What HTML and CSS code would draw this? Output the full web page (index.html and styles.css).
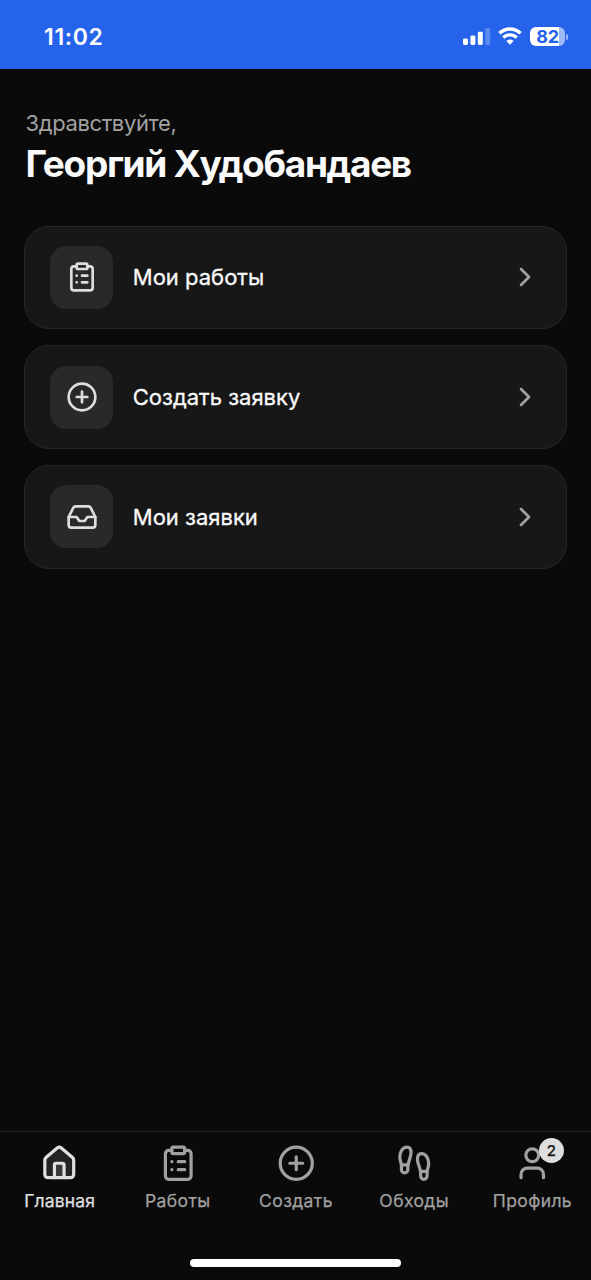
FILE: index.html
```html
<!DOCTYPE html>
<html lang="ru">
<head>
<meta charset="utf-8">
<title>Главная</title>
<link rel="stylesheet" href="styles.css">
</head>
<body>
<svg class="sprite" aria-hidden="true">
  <symbol id="clipboard" viewBox="0 0 24 24"><rect width="8" height="4" x="8" y="2" rx="1"/><path d="M16 4h2a2 2 0 0 1 2 2v14a2 2 0 0 1-2 2H6a2 2 0 0 1-2-2V6a2 2 0 0 1 2-2h2M12 11h4M12 16h4M8 11h.01M8 16h.01"/></symbol>
  <symbol id="plus" viewBox="0 0 24 24"><circle cx="12" cy="12" r="10"/><path d="M8 12h8M12 8v8"/></symbol>
  <symbol id="inbox" viewBox="0 0 24 24"><path d="M22 12h-6l-2 3h-4l-2-3H2"/><path d="M5.45 5.11 2 12v6a2 2 0 0 0 2 2h16a2 2 0 0 0 2-2v-6l-3.45-6.89A2 2 0 0 0 16.76 4H7.24a2 2 0 0 0-1.79 1.11z"/></symbol>
  <symbol id="chevron" viewBox="0 0 24 24"><path d="m9 18 6-6-6-6"/></symbol>
</svg>
<div class="screen">
  <header class="status">
    <span class="time">11:02</span>
    <div class="indicators">
      <svg class="signal" viewBox="0 0 28 18"><rect x="0" y="11.5" width="5" height="6.5" rx="1.4"/><rect x="7.4" y="8.5" width="5" height="9.5" rx="1.4"/><rect x="14.8" y="4.7" width="5" height="13.3" rx="1.4"/><rect class="faint" x="22.2" y="1" width="5" height="17" rx="1.4"/></svg>
      <svg class="wifi" viewBox="0 0 24 18"><path d="M1.4 6.3a15.2 15.2 0 0 1 21.2 0M5.3 10.6a9.6 9.6 0 0 1 13.4 0"/><path class="dot" d="M8.4 14a5.2 5.2 0 0 1 7.2 0L12 17.8z"/></svg>
      <div class="battery"><div class="level"><span>82</span></div><i class="cap"></i></div>
    </div>
  </header>
  <main class="content">
    <p class="hello">Здравствуйте,</p>
    <h1 class="name">Георгий Худобандаев</h1>
    <div class="cards">
      <a class="card"><span class="tile"><svg class="icon"><use href="#clipboard"/></svg></span><span class="label">Мои работы</span><svg class="chev"><use href="#chevron"/></svg></a>
      <a class="card"><span class="tile"><svg class="icon"><use href="#plus"/></svg></span><span class="label">Создать заявку</span><svg class="chev"><use href="#chevron"/></svg></a>
      <a class="card"><span class="tile"><svg class="icon"><use href="#inbox"/></svg></span><span class="label">Мои заявки</span><svg class="chev"><use href="#chevron"/></svg></a>
    </div>
  </main>
  <nav class="tabs">
    <a class="tab active"><svg class="tabicon home" viewBox="0 0 24 24"><path d="M3 10a2 2 0 0 1 .709-1.528l7-5.999a2 2 0 0 1 2.582 0l7 5.999A2 2 0 0 1 21 10v9a2 2 0 0 1-2 2H5a2 2 0 0 1-2-2z"/><path d="M15 21v-8a1 1 0 0 0-1-1h-4a1 1 0 0 0-1 1v8"/></svg><span>Главная</span></a>
    <a class="tab"><svg class="tabicon"><use href="#clipboard"/></svg><span>Работы</span></a>
    <a class="tab"><svg class="tabicon"><use href="#plus"/></svg><span>Создать</span></a>
    <a class="tab"><svg class="tabicon" viewBox="0 0 24 24"><path d="M4 16v-2.38C4 11.5 2.97 10.5 3 8c.03-2.72 1.49-6 4.5-6C9.37 2 10 3.8 10 5.5c0 3.11-2 5.66-2 8.68V16a2 2 0 1 1-4 0Z"/><path d="M20 20v-2.38c0-2.12 1.03-3.12 1-5.62-.03-2.72-1.49-6-4.5-6C14.63 6 14 7.8 14 9.5c0 3.11 2 5.66 2 8.68V20a2 2 0 1 0 4 0Z"/><path d="M16 17h4M4 13h4"/></svg><span>Обходы</span></a>
    <a class="tab"><svg class="tabicon" viewBox="0 0 24 24"><path d="M19 21v-2a4 4 0 0 0-4-4H9a4 4 0 0 0-4 4v2"/><circle cx="12" cy="7" r="4"/></svg><b class="badge">2</b><span>Профиль</span></a>
  </nav>
  <div class="homebar"></div>
</div>
</body>
</html>
```
FILE: styles.css
```css
* { box-sizing: border-box; }
body { margin: 0; background: #0a0a0a; font-family: Inter, "Noto Sans", sans-serif; color: #fafafa; }
svg { display: block; fill: none; stroke: currentColor; stroke-linecap: round; stroke-linejoin: round; }
.sprite { position: absolute; width: 0; height: 0; }
.screen { width: 591px; height: 1280px; display: flex; flex-direction: column; overflow: hidden; }
.status { height: 69px; background: #2563eb; display: flex; justify-content: space-between; padding: 0 23px 0 44px; flex: none; }
.time { font-size: 23px; font-weight: 600; line-height: 28px; margin-top: 22.5px; letter-spacing: .65px; }
.indicators { display: flex; margin-top: 27px; height: 19px; }
.signal { width: 28px; height: 18px; fill: #fff; stroke: none; }
.faint { opacity: .25; }
.wifi { width: 24px; height: 18px; margin-left: 7px; stroke: #fff; stroke-width: 3.4; stroke-linecap: butt; }
.wifi .dot { fill: #fff; stroke: none; }
.battery { display: flex; align-items: center; margin-left: 8px; height: 19px; }
.level { width: 35px; height: 19px; border-radius: 6px; background: linear-gradient(90deg, #fff 82%, #9db9f7 82%); color: #2563eb; font-size: 18px; line-height: 20px; font-weight: 700; letter-spacing: -.4px; text-align: center; }
.cap { width: 2px; height: 6px; margin-left: 1px; border-radius: 0 2px 2px 0; background: #9db9f7; }
.content { flex: 1; padding: 39px 24px 0; }
.hello { margin: 0 0 0 1.5px; font-size: 22px; line-height: 30px; color: #a1a1a1; letter-spacing: -.38px; }
.name { margin: 5px 0 0 1.5px; font-size: 37px; line-height: 42px; font-weight: 700; letter-spacing: -1.33px; white-space: nowrap; }
.cards { display: grid; grid-auto-rows: 103.5px; gap: 16.3px; margin-top: 40.5px; }
.card { display: flex; align-items: center; border: 1.5px solid #262626; border-radius: 25px; background: #171717; padding: 0 25px 0 25.3px; }
.tile { width: 63px; height: 63px; border-radius: 16px; background: #292929; color: #dedede; display: grid; place-items: center; }
.icon { width: 32px; height: 32px; stroke-width: 2; }
.label { margin-left: 19.5px; font-size: 22px; font-weight: 400; -webkit-text-stroke: .3px currentColor; line-height: 30px; letter-spacing: 0; }
.chev { width: 32px; height: 32px; margin-left: auto; color: #a1a1a1; stroke-width: 2; }
.tabs { height: 110px; border-top: 1px solid #262626; display: grid; grid-template-columns: repeat(5, 1fr); flex: none; }
.tab { position: relative; display: flex; flex-direction: column; align-items: center; padding: 12.3px 0 0 1px; color: #a1a1a1; font-size: 17.5px; line-height: 24px; font-weight: 400; -webkit-text-stroke: .25px currentColor; letter-spacing: .4px; }
.tabicon { width: 38.5px; height: 38.5px; stroke-width: 2; margin-bottom: 7.2px; }
.active { color: #e0e0e0; }
.active span { letter-spacing: .15px; }
.home { fill: rgba(224, 224, 224, .12); }
.badge { position: absolute; left: 66px; top: 6.5px; width: 25px; height: 25px; border-radius: 50%; background: #dedede; color: #171717; font-size: 15px; line-height: 25px; font-weight: 500; text-align: center; letter-spacing: 0; }
.homebar { width: 211px; height: 8px; border-radius: 4px; background: #fff; margin: 18.5px auto 13px; flex: none; }
```
